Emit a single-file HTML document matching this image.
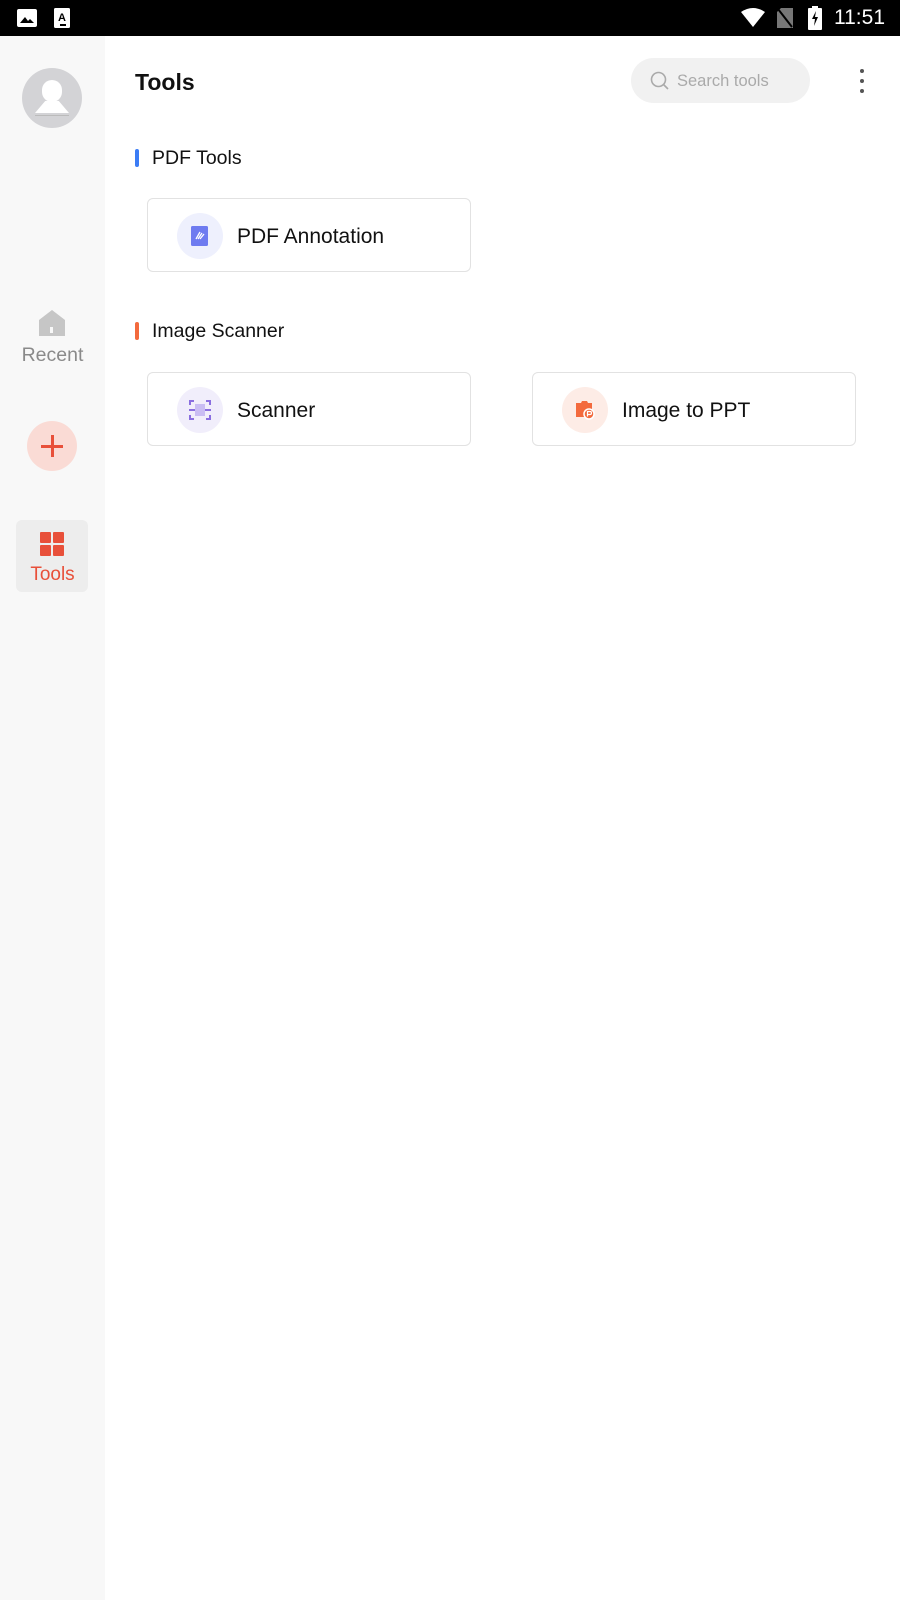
<!DOCTYPE html>
<html><head><meta charset="utf-8"><style>
*{margin:0;padding:0;box-sizing:border-box}
body{width:900px;height:1600px;background:#fff;font-family:"Liberation Sans",Roboto,sans-serif;position:relative;overflow:hidden}
.abs{position:absolute}
.status{left:0;top:0;width:900px;height:36px;background:#000;color:#fff}
.side{left:0;top:36px;width:105px;height:1564px;background:#f8f8f8}
.card{position:absolute;width:324px;height:74px;border:1px solid #e2e2e2;border-radius:6px;background:#fff}
.card .ic{position:absolute;left:29px;top:14px;width:46px;height:46px;border-radius:50%}
.card .t{position:absolute;left:89px;top:2px;line-height:72px;font-size:21px;color:#111}
.sec{position:absolute;left:152px;font-size:19.5px;color:#111}
.bar{position:absolute;left:135px;width:4px;height:18px;border-radius:2px}
</style></head><body>
<div class="abs status">
  <svg class="abs" style="left:17px;top:9px" width="20" height="18" viewBox="0 0 20 18"><rect x="0" y="0" width="20" height="18" rx="2" fill="#fff"/><path d="M3 14 L8 8 L11 12 L13 10 L17 14Z" fill="#000"/></svg>
  <svg class="abs" style="left:54px;top:8px" width="16" height="20" viewBox="0 0 16 20"><rect width="16" height="20" rx="1.5" fill="#fff"/><text x="8" y="13" font-size="11" font-weight="bold" text-anchor="middle" font-family="Liberation Sans" fill="#000">A</text><rect x="6" y="16" width="6" height="2" fill="#000"/></svg>
  <svg class="abs" style="left:741px;top:8px" width="24" height="20" viewBox="0 0 24 20"><path d="M0 4 Q12 -4 24 4 L12 19Z" fill="#fff"/></svg>
  <svg class="abs" style="left:777px;top:8px" width="16" height="20" viewBox="0 0 16 20"><path d="M4 0 H16 V20 H0 V4Z" fill="#777"/><path d="M1 1 L15 19" stroke="#000" stroke-width="2"/></svg>
  <svg class="abs" style="left:808px;top:6px" width="14" height="24" viewBox="0 0 14 24"><rect x="4" y="0" width="6" height="3" fill="#fff"/><rect x="0" y="2" width="14" height="22" rx="1" fill="#fff"/><path d="M8 5 L4 13 H7 L6 20 L10 11 H7Z" fill="#000"/></svg>
  <div class="abs" style="left:834px;top:6px;font-size:21px;color:#fff">11:51</div>
</div>
<div class="abs side">
  <div class="abs" style="left:22px;top:32px;width:60px;height:60px;border-radius:50%;background:#d3d3d6;overflow:hidden">
    <div class="abs" style="left:20px;top:12px;width:20px;height:22px;border-radius:10px;background:#fff"></div>
    <div class="abs" style="left:13px;top:33px;width:34px;height:12px;background:#fff;clip-path:polygon(30% 0,70% 0,100% 100%,0 100%)"></div>
    <div class="abs" style="left:13px;top:47px;width:34px;height:1px;background:#bbb"></div>
  </div>
  <svg class="abs" style="left:39px;top:274px" width="26" height="26" viewBox="0 0 26 26"><path d="M13 0 L26 10 V26 H0 V10Z" fill="#c6c6c6"/><rect x="11" y="17" width="3" height="6" fill="#f8f8f8"/></svg>
  <div class="abs" style="left:0;width:105px;top:308px;text-align:center;font-size:19.5px;color:#8a8a8a">Recent</div>
  <div class="abs" style="left:27px;top:385px;width:50px;height:50px;border-radius:50%;background:#fadbd5"></div>
  <div class="abs" style="left:41px;top:409px;width:22px;height:3px;background:#e8503a"></div>
  <div class="abs" style="left:50.5px;top:399px;width:3px;height:22px;background:#e8503a"></div>
  <div class="abs" style="left:16px;top:484px;width:72px;height:72px;border-radius:6px;background:#ededed"></div>
  <div class="abs" style="left:40px;top:496px;width:11px;height:11px;background:#e8503a;border-radius:1px"></div>
  <div class="abs" style="left:53px;top:496px;width:11px;height:11px;background:#e8503a;border-radius:1px"></div>
  <div class="abs" style="left:40px;top:509px;width:11px;height:11px;background:#e8503a;border-radius:1px"></div>
  <div class="abs" style="left:53px;top:509px;width:11px;height:11px;background:#e8503a;border-radius:1px"></div>
  <div class="abs" style="left:0;width:105px;top:528px;text-align:center;font-size:19px;color:#e8503a">Tools</div>
</div>
<div class="abs" style="left:135px;top:69px;font-size:23px;font-weight:bold;color:#111">Tools</div>
<div class="abs" style="left:631px;top:58px;width:179px;height:45px;border-radius:23px;background:#f1f1f1">
  <svg class="abs" style="left:19px;top:13px" width="20" height="20" viewBox="0 0 20 20"><circle cx="8.5" cy="8.5" r="7" fill="none" stroke="#aaa" stroke-width="1.6"/><path d="M13.5 13.5 L18 18" stroke="#aaa" stroke-width="1.6"/></svg>
  <div class="abs" style="left:46px;top:14px;font-size:16.5px;color:#aaa">Search tools</div>
</div>
<div class="abs" style="left:860px;top:69px;width:4px;height:4px;border-radius:50%;background:#555"></div>
<div class="abs" style="left:860px;top:79px;width:4px;height:4px;border-radius:50%;background:#555"></div>
<div class="abs" style="left:860px;top:89px;width:4px;height:4px;border-radius:50%;background:#555"></div>

<div class="bar" style="top:149px;background:#3b7cf5"></div>
<div class="sec" style="top:147px">PDF Tools</div>
<div class="card" style="left:147px;top:198px">
  <div class="ic" style="background:#eef0fd"></div>
  <svg class="abs" style="left:43px;top:27px" width="18" height="20" viewBox="0 0 18 20"><rect x="0" y="0" width="17" height="20" rx="1.5" fill="#6e7bf0"/><path d="M5 13 L9 6 M7 13 L11 7 M9 13 L13 8" stroke="#fff" stroke-width="1.3"/></svg>
  <div class="t">PDF Annotation</div>
</div>

<div class="bar" style="top:322px;background:#f36a3d"></div>
<div class="sec" style="top:320px">Image Scanner</div>
<div class="card" style="left:147px;top:372px">
  <div class="ic" style="background:#f1eefb"></div>
  <svg class="abs" style="left:40px;top:25px" width="24" height="24" viewBox="0 0 24 24" fill="none" stroke="#8a6fe0" stroke-width="2"><path d="M2 7 V3 H6 M18 3 H22 V7 M22 17 V21 H18 M6 21 H2 V17"/><path d="M1 12 H23"/><rect x="7" y="6" width="10" height="12" fill="#c9bdf3" stroke="none"/></svg>
  <div class="t">Scanner</div>
</div>
<div class="card" style="left:532px;top:372px">
  <div class="ic" style="background:#fdece6"></div>
  <svg class="abs" style="left:41px;top:26px" width="22" height="22" viewBox="0 0 22 22"><path d="M2 4 H7 L8 2 H13 L14 4 H18 V18 H2Z" fill="#f36a3d"/><circle cx="15" cy="15" r="5" fill="#f36a3d" stroke="#fff" stroke-width="1.5"/><path d="M13.5 17.5 V12.5 H16 Q17.5 12.5 17.5 14 Q17.5 15.5 16 15.5 H13.5" fill="none" stroke="#fff" stroke-width="1.2"/></svg>
  <div class="t">Image to PPT</div>
</div>
</body></html>
